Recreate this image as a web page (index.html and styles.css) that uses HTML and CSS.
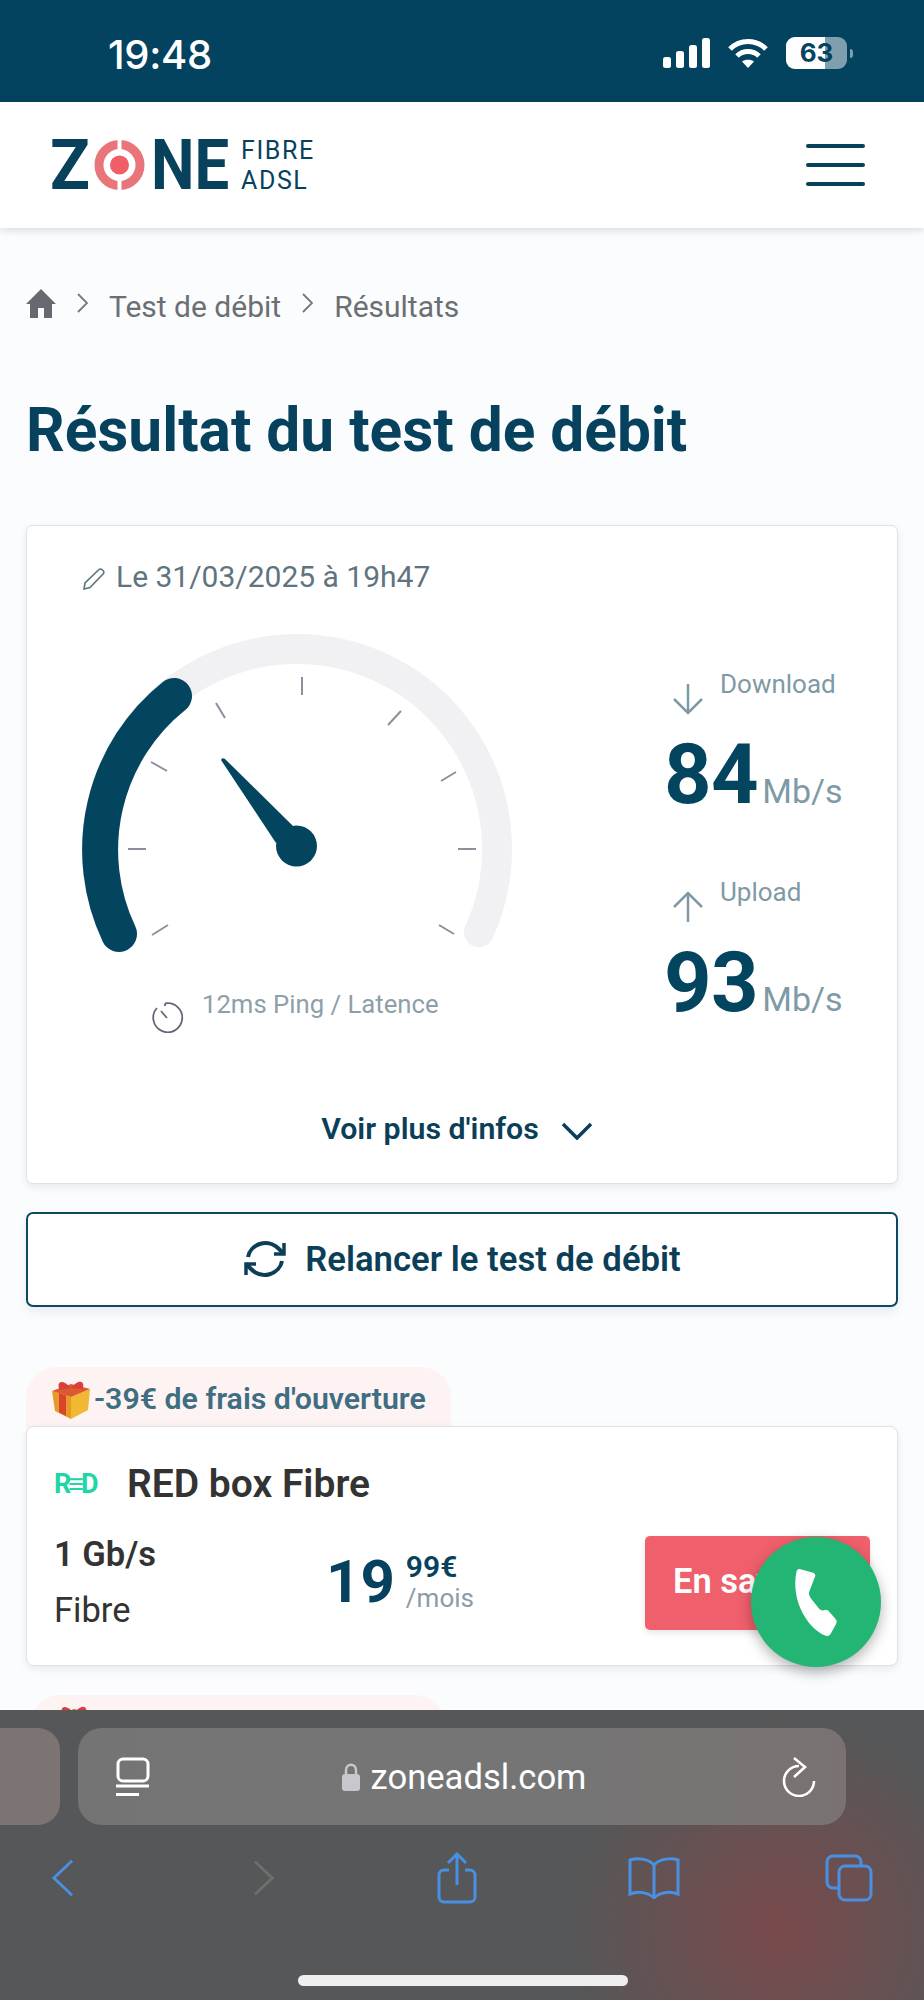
FILE: index.html
```html
<!DOCTYPE html>
<html lang="fr">
<head>
<meta charset="utf-8">
<title>Résultat du test de débit</title>
<link rel="stylesheet" href="styles.css">
</head>
<body>
<div class="phone">
  <div class="status">
    <span class="clock">19:48</span>
    <div class="status-icons">
      <svg class="signal" viewBox="0 0 47 30"><rect x="0" y="19" width="8" height="11" rx="2.5"/><rect x="13" y="13" width="8" height="17" rx="2.5"/><rect x="26" y="7" width="8" height="23" rx="2.5"/><rect x="39" y="0" width="8" height="30" rx="2.5"/></svg>
      <svg class="wifi" viewBox="0 0 42 30" fill="none" stroke="#fff" stroke-width="5"><path d="M3 11 C13 1 29 1 39 11"/><path d="M10 18 C16 12 26 12 32 18"/><path d="M21 30 L15 23.5 C18 21 24 21 27 23.5 Z" fill="#fff" stroke="none"/></svg>
      <div class="battery"><div class="battery-body"><span class="battery-level"></span><span class="battery-num">63</span></div><span class="battery-cap"></span></div>
    </div>
  </div>
  <header class="site-head">
    <div class="logo">
      <div class="logo-big">
        <span class="logo-z">Z</span>
        <svg class="logo-o" viewBox="0 0 51 50" fill="none"><circle cx="25.500" cy="25" r="20.500" stroke="#e9757b" stroke-width="9"/><rect x="23.500" y="0" width="4" height="9" fill="#fff"/><rect x="23.500" y="41" width="4" height="9" fill="#fff"/><circle cx="25.500" cy="25" r="9.500" fill="#f05f68"/></svg>
        <span class="logo-ne">NE</span>
      </div>
      <div class="logo-small"><span>FIBRE</span><span>ADSL</span></div>
    </div>
    <div class="burger"><span></span><span></span><span></span></div>
  </header>
  <main class="content">
    <nav class="crumbs">
      <svg class="home" viewBox="0 0 30 30"><path d="M15 1 L30 16 H26 V30 H18 V20 H12 V30 H4 V16 H0 Z" fill="#666a70"/></svg>
      <svg class="crumb-sep" viewBox="0 0 11 20" fill="none" stroke="#777" stroke-width="1.800"><path d="M1 1 L10 10 L1 19"/></svg>
      <span>Test de débit</span>
      <svg class="crumb-sep" viewBox="0 0 11 20" fill="none" stroke="#777" stroke-width="1.800"><path d="M1 1 L10 10 L1 19"/></svg>
      <span>Résultats</span>
    </nav>
    <h1 class="title">Résultat du test de débit</h1>
    <section class="result">
      <div class="date">
        <svg class="pencil" viewBox="0 0 24 24" fill="none" stroke="#5f7480" stroke-width="1.600"><path d="M2 22 L3 16 L17 2.500 C19 1 23 4 21.500 6.500 L8 20.500 Z"/></svg>
        <span>Le 31/03/2025 à 19h47</span>
      </div>
      <div class="result-body">
        <div class="gauge-col">
          <svg class="gauge" viewBox="70 625 460 335" fill="none">
            <path d="M115 932 A200 200 0 1 1 479 932" stroke="#f1f1f3" stroke-width="30" stroke-linecap="round"/>
            <path d="M119 934 A197 197 0 0 1 174 696" stroke="#03455f" stroke-width="36" stroke-linecap="round"/>
            <g stroke="#8e8e9c" stroke-width="2">
              <path d="M128 849 H146"/><path d="M458 849 H476"/><path d="M302 677 V695"/>
              <path d="M151 762 L167 771"/><path d="M216 703 L225 718"/><path d="M401 711 L388 725"/>
              <path d="M456 772 L441 781"/><path d="M152 935 L168 925"/><path d="M454 934 L439 925"/>
            </g>
            <path d="M221 760 Q222 757 225 759 L293 826 L276 843 Z" fill="#03455f"/>
            <circle cx="296.500" cy="846" r="20.500" fill="#03455f"/>
          </svg>
          <div class="ping">
            <svg class="ping-icon" viewBox="0 0 32 32" fill="none" stroke="#66667a" stroke-width="1.800"><path d="M13 2.500 A14.500 14.500 0 1 1 5 7"/><path d="M9 10 L15 17"/><path d="M13 2.500 L13 5"/></svg>
            <span>12ms Ping / Latence</span>
          </div>
        </div>
        <div class="speeds">
          <div class="speed">
            <div class="speed-label">
              <svg class="arrow" viewBox="0 0 32 32" fill="none" stroke="#7f9aa6" stroke-width="2.500"><path d="M16 1 V29 M2 16 L16 30 L30 16"/></svg>
              <span>Download</span>
            </div>
            <div class="speed-value"><b>84</b><span>Mb/s</span></div>
          </div>
          <div class="speed">
            <div class="speed-label">
              <svg class="arrow" viewBox="0 0 32 32" fill="none" stroke="#7f9aa6" stroke-width="2.500"><path d="M16 31 V3 M2 16 L16 2 L30 16"/></svg>
              <span>Upload</span>
            </div>
            <div class="speed-value"><b>93</b><span>Mb/s</span></div>
          </div>
        </div>
      </div>
      <div class="more">
        <span>Voir plus d'infos</span>
        <svg class="more-chev" viewBox="0 0 32 18" fill="none" stroke="#0b3f58" stroke-width="3.500"><path d="M2 2 L16 16 L30 2"/></svg>
      </div>
    </section>
    <button class="retest">
      <svg class="retest-icon" viewBox="0 0 44 38" fill="none" stroke="#0b3f58" stroke-width="4"><path d="M5 17 C7 5 24 -3 36 9 L41 14"/><path d="M41 3 V14 H31" stroke-width="3.500"/><path d="M39 21 C37 33 20 41 8 29 L3 24"/><path d="M3 35 V24 H13" stroke-width="3.500"/></svg>
      <span>Relancer le test de débit</span>
    </button>
    <div class="badge">
      <svg class="gift" viewBox="0 0 40 40"><path d="M1 12 L20 18 V40 L4 32 Z" fill="#e79a2a"/><path d="M8 14 L15 16.500 V37 L8 33.500 Z" fill="#d8452b"/><path d="M20 18 L39 10 L37 31 L20 40 Z" fill="#f2b733"/><path d="M1 12 L20 5 L39 10 L20 18 Z" fill="#dd5a2e"/><path d="M20 9 C9 -3 5 6 9 11 Z M20 9 C30 -3 35 5 31 10 Z" fill="#d9403c"/></svg>
      <span>-39€ de frais d'ouverture</span>
    </div>
    <article class="offer">
      <div class="offer-head">
        <span class="red-logo">R≡D</span>
        <h2>RED box Fibre</h2>
      </div>
      <div class="offer-row">
        <div class="offer-spec"><b>1 Gb/s</b><span>Fibre</span></div>
        <div class="offer-price">
          <b class="euros">19</b>
          <div class="cents"><b>99€</b><span>/mois</span></div>
        </div>
        <a class="cta">En savoir plus</a>
      </div>
    </article>
    <div class="badge badge-next">
      <svg class="gift" viewBox="0 0 40 40"><path d="M1 12 L20 18 V40 L4 32 Z" fill="#e79a2a"/><path d="M8 14 L15 16.500 V37 L8 33.500 Z" fill="#d8452b"/><path d="M20 18 L39 10 L37 31 L20 40 Z" fill="#f2b733"/><path d="M1 12 L20 5 L39 10 L20 18 Z" fill="#dd5a2e"/><path d="M20 9 C9 -3 5 6 9 11 Z M20 9 C30 -3 35 5 31 10 Z" fill="#d9403c"/></svg>
    </div>
  </main>
  <div class="fab">
    <svg viewBox="0 0 125 203"><path d="M14 3 L54 14 Q62 17 60 25 L42 72 Q40 82 48 92 L72 122 Q80 130 90 125 L98 126 L121 152 Q127 158 122 168 L106 197 Q101 205 92 202 C60 192 25 150 10 105 C0 75 -2 40 4 12 Q6 2 14 3 Z" fill="#fff"/></svg>
  </div>
  <div class="safari">
    <div class="url-row">
      <div class="tab-peek"></div>
      <div class="url">
        <svg class="reader" viewBox="0 0 34 40" fill="none" stroke="#fff" stroke-width="3"><rect x="2" y="2" width="30" height="22" rx="5"/><path d="M0 29 H33"/><path d="M0 37.500 H23"/></svg>
        <div class="url-text">
          <svg class="lock" viewBox="0 0 18 28"><path d="M4 12 V7 C4 0 14 0 14 7 V12" fill="none" stroke="#c8c8cc" stroke-width="2.500"/><rect x="0" y="11" width="18" height="17" rx="3" fill="#c8c8cc"/></svg>
          <span>zoneadsl.com</span>
        </div>
        <svg class="reload" viewBox="0 0 34 40" fill="none" stroke="#fff" stroke-width="2.600"><path d="M17 9 A15 15 0 1 0 32 24"/><path d="M12 1 L23 10 L12 20"/></svg>
      </div>
    </div>
    <div class="tools">
      <svg class="t-back" viewBox="0 0 24 40" fill="none" stroke="#4a90e2" stroke-width="3"><path d="M22 2 L3 20 L22 38"/></svg>
      <svg class="t-fwd" viewBox="0 0 24 40" fill="none" stroke="#6f6f6f" stroke-width="3"><path d="M2 2 L21 20 L2 38"/></svg>
      <svg class="t-share" viewBox="0 0 40 52" fill="none" stroke="#4a90e2" stroke-width="3"><path d="M12 18 H7 A5 5 0 0 0 2 23 V45 A5 5 0 0 0 7 50 H33 A5 5 0 0 0 38 45 V23 A5 5 0 0 0 33 18 H28"/><path d="M20 33 V3 M11 11 L20 2 L29 11"/></svg>
      <svg class="t-book" viewBox="0 0 52 42" fill="none" stroke="#4a90e2" stroke-width="3"><path d="M26 8 C20 1 8 1 2 3 V37 C10 34 20 35 26 41 C32 35 42 34 50 37 V3 C44 1 32 1 26 8 Z M26 8 V41"/></svg>
      <svg class="t-tabs" viewBox="0 0 48 48" fill="none" stroke="#4a90e2" stroke-width="3"><rect x="14" y="12" width="32" height="34" rx="6"/><path d="M14 34 H8 A6 6 0 0 1 2 28 V8 A6 6 0 0 1 8 2 H30 A6 6 0 0 1 36 8 V12"/></svg>
    </div>
    <div class="home-bar"></div>
  </div>
</div>
</body>
</html>
```
FILE: styles.css
```css
* { box-sizing: border-box; }
html, body { margin: 0; padding: 0; }
body { font-family: Roboto, "Liberation Sans", sans-serif; background: #fbfcfe; }
.phone { position: relative; width: 924px; height: 2000px; display: flex; flex-direction: column; overflow: hidden; }

.status { height: 102px; flex: none; background: #03435f; color: #fff; display: flex; justify-content: space-between; align-items: flex-start; padding: 33px 71px 0 108px; }
.clock { font-family: Inter, Roboto, sans-serif; font-weight: 500; font-size: 40px; line-height: 44px; letter-spacing: -0.3px; }
.status-icons { display: flex; align-items: center; gap: 17px; padding-top: 4px; }
.signal { width: 47px; height: 30px; fill: #fff; }
.wifi { width: 42px; height: 30px; }
.battery { display: flex; align-items: center; gap: 3px; }
.battery-body { position: relative; width: 61px; height: 32px; border-radius: 9px; overflow: hidden; background: #7f9fae; display: flex; align-items: center; justify-content: center; }
.battery-level { position: absolute; left: 0; top: 0; bottom: 0; width: 39px; background: #fff; }
.battery-num { position: relative; color: #03435f; font-family: Inter, sans-serif; font-weight: 700; font-size: 26px; line-height: 32px; }
.battery-cap { width: 3px; height: 9px; border-radius: 0 3px 3px 0; background: #7f9fae; }

.site-head { height: 126px; flex: none; background: #fff; box-shadow: 0 2px 8px rgba(0,0,0,.14); display: flex; justify-content: space-between; align-items: center; padding: 0 59px 0 50px; position: relative; z-index: 1; }
.logo { display: flex; align-items: center; gap: 6px; }
.logo-big { display: flex; align-items: center; height: 50px; }
.logo-z, .logo-ne { display: inline-block; font-weight: 700; font-size: 70px; line-height: 50px; color: #07415c; transform-origin: left center; }
.logo-z { width: 44px; transform: scaleX(.94); }
.logo-o { width: 51px; height: 50px; }
.logo-ne { width: 84px; margin-left: 6px; transform: scaleX(.88); }
.logo-small { display: flex; flex-direction: column; gap: 7px; font-weight: 400; font-size: 25px; line-height: 23px; letter-spacing: 1.600px; color: #07415c; }
.burger { display: flex; flex-direction: column; gap: 15px; width: 59px; }
.burger span { height: 4px; border-radius: 2px; background: #07415c; }

.content { flex: 1; min-height: 0; overflow: hidden; padding: 0 26px; }
.crumbs { display: flex; align-items: center; margin-top: 58px; height: 40px; color: #6b6f73; font-size: 30px; }
.home { width: 30px; height: 30px; margin-top: -6px; }
.crumb-sep { width: 11px; height: 20px; margin: -6px 21px 0 21px; }
.title { margin: 72px 0 0; font-size: 60.400px; line-height: 66px; font-weight: 700; color: #06425d; }

.result { margin-top: 61px; height: 659px; background: #fff; border: 1px solid #dfe2e6; border-radius: 7px; box-shadow: 0 3px 8px rgba(0,0,0,.08); display: flex; flex-direction: column; }
.date { display: flex; align-items: center; gap: 10px; padding: 31px 0 0 55px; font-size: 30px; line-height: 40px; color: #5f7480; }
.pencil { width: 24px; height: 24px; margin-top: 3px; }
.result-body { display: flex; }
.gauge-col { width: 637px; padding: 28px 0 0 43px; }
.gauge { display: block; width: 460px; height: 335px; }
.ping { display: flex; align-items: flex-start; gap: 18px; padding: 27px 0 0 82px; font-size: 25.700px; line-height: 34px; color: #8d9fa9; }
.ping-icon { width: 32px; height: 32px; margin-top: 14px; }
.speeds { display: flex; flex-direction: column; gap: 58px; padding-top: 70px; }
.speed-label { display: flex; gap: 16px; padding-left: 8px; font-size: 26px; line-height: 34px; color: #7f9aa6; }
.arrow { width: 32px; height: 32px; margin-top: 16px; }
.speed-value { display: flex; align-items: baseline; gap: 4px; margin-top: 18px; }
.speed-value b { font-size: 83px; line-height: 84px; font-weight: 700; color: #03455f; letter-spacing: -0.5px; }
.speed-value span { font-size: 34px; color: #7f9aa6; }
.more { margin-top: auto; padding: 0 10px 36px 0; display: flex; justify-content: center; align-items: center; gap: 22px; font-size: 30.300px; line-height: 36px; font-weight: 600; color: #0b3f58; }
.more-chev { width: 32px; height: 18px; margin-top: 4px; }

.retest { width: 100%; height: 95px; margin-top: 28px; background: #fff; border: 2px solid #0d4a60; border-radius: 7px; box-shadow: 0 5px 10px rgba(100,130,160,.12); display: flex; align-items: center; justify-content: center; gap: 18px; padding-bottom: 3px; font-family: inherit; font-size: 34.700px; font-weight: 600; color: #0b3f58; }
.retest-icon { width: 44px; height: 38px; }

.badge { margin-top: 60px; width: 425px; height: 62px; padding: 10px 0 0 25px; background: #fdf3f3; border-radius: 30px 30px 0 0; display: flex; align-items: flex-start; gap: 3px; font-size: 30.300px; line-height: 44px; font-weight: 600; color: #3f6d82; }
.gift { width: 40px; height: 40px; flex: none; margin-top: 2px; }
.offer { position: relative; height: 240px; margin-top: -3px; background: #fff; border: 1px solid #dfe2e6; border-radius: 8px; box-shadow: 0 3px 8px rgba(0,0,0,.08); padding: 0 27px; }
.offer-head { display: flex; align-items: center; gap: 27px; height: 42px; margin-top: 36px; }
.red-logo { width: 46px; font-size: 27px; font-weight: 700; color: #1fd6a4; letter-spacing: -3px; white-space: nowrap; }
h2 { margin: 0; font-size: 39px; line-height: 42px; font-weight: 600; color: #333; }
.offer-row { display: flex; align-items: flex-start; margin-top: 30px; }
.offer-spec { display: flex; flex-direction: column; width: 272px; gap: 18px; font-size: 34.500px; line-height: 38px; color: #333; }
.offer-spec b { font-weight: 600; }
.offer-price { display: flex; width: 319px; gap: 11px; padding-top: 11px; }
.euros { font-size: 60px; line-height: 72px; color: #06425d; font-weight: 700; }
.cents { display: flex; flex-direction: column; padding-top: 5px; }
.cents b { font-size: 30px; line-height: 32px; color: #06425d; font-weight: 600; }
.cents span { font-size: 26px; line-height: 30px; color: #8c9ba5; }
.cta { display: block; flex: none; width: 225px; height: 94px; background: #f0606c; border-radius: 5px; padding-left: 28px; font-size: 34.500px; line-height: 91px; font-weight: 600; color: #fff; box-shadow: 0 3px 6px rgba(0,0,0,.1); white-space: nowrap; margin-top: 1px; }
.badge-next { margin-top: 29px; margin-left: 4px; width: 415px; padding-top: 7px; padding-left: 24px; }

.fab { position: absolute; left: 751px; top: 1537px; width: 130px; height: 130px; border-radius: 50%; background: #22b573; box-shadow: 0 5px 14px rgba(0,0,0,.3); display: flex; align-items: center; justify-content: center; }
.fab svg { width: 42px; height: 68px; }

.safari { height: 290px; flex: none; position: relative; z-index: 1; background: radial-gradient(circle 210px at 780px 220px, #7a4a4c 0%, rgba(122,74,76,0) 100%), #565758; }
.url-row { display: flex; gap: 18px; padding-top: 18px; height: 115px; }
.tab-peek { width: 60px; height: 97px; border-radius: 0 22px 22px 0; background: #7c7472; }
.url { width: 768px; height: 97px; border-radius: 24px; background: linear-gradient(90deg, #747474 0%, #757575 60%, #7a7272 100%); display: flex; align-items: center; justify-content: space-between; padding: 0 30px 0 38px; color: #fff; font-size: 34.600px; }
.reader { width: 34px; height: 40px; }
.url-text { display: flex; align-items: center; gap: 11px; margin-right: 4px; }
.lock { width: 18px; height: 28px; }
.reload { width: 34px; height: 40px; }
.tools { display: flex; align-items: center; height: 66px; margin-top: 20px; padding-left: 51px; }
.t-back { width: 23px; height: 40px; }
.t-fwd { width: 22px; height: 40px; margin-left: 179px; }
.t-share { width: 40px; height: 52px; margin-left: 162px; }
.t-book { width: 52px; height: 42px; margin-left: 151px; }
.t-tabs { width: 48px; height: 48px; margin-left: 145px; }
.home-bar { width: 330px; height: 11px; margin: 64px 0 0 298px; border-radius: 6px; background: #efefef; }
```
